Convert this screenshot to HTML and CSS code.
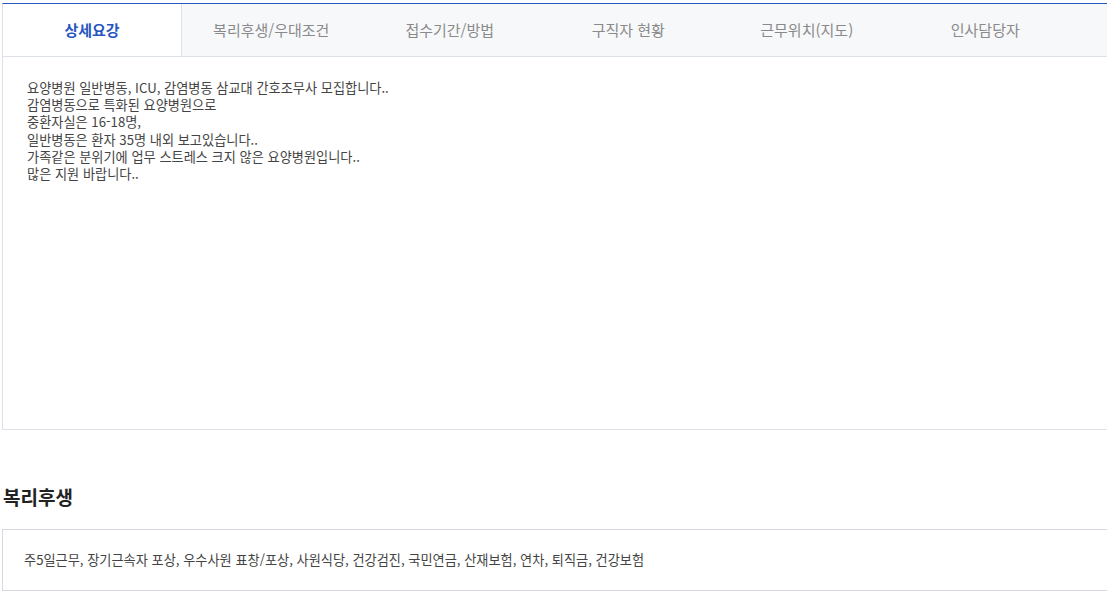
FILE: index.html
```html
<!DOCTYPE html>
<html lang="ko">
<head>
    <meta charset="UTF-8">
    <meta name="viewport" content="width=device-width, initial-scale=1.0">
    <title>채용 상세</title>
    <link rel="stylesheet" href="styles.css">
</head>
<body>
    <div class="wrap">
        <!-- 탭 메뉴 -->
        <ul class="tabs">
            <li class="tab active">상세요강</li>
            <li class="tab">복리후생/우대조건</li>
            <li class="tab">접수기간/방법</li>
            <li class="tab">구직자 현황</li>
            <li class="tab">근무위치(지도)</li>
            <li class="tab">인사담당자</li>
            <li class="tab tab-rest"></li>
        </ul>

        <div class="detail">
            <p>요양병원 일반병동, ICU, 감염병동 삼교대 간호조무사 모집합니다..<br>
            감염병동으로 특화된 요양병원으로<br>
            중환자실은 16-18명,<br>
            일반병동은 환자 35명 내외 보고있습니다..<br>
            가족같은 분위기에 업무 스트레스 크지 않은 요양병원입니다..<br>
            많은 지원 바랍니다..</p>
        </div>

        <h2 class="section-title">복리후생</h2>
        <div class="welfare">
            주5일근무, 장기근속자 포상, 우수사원 표창/포상, 사원식당, 건강검진, 국민연금, 산재보험, 연차, 퇴직금, 건강보험
        </div>
    </div>
</body>
</html>
```

FILE: styles.css
```css
body {
    margin: 0;
    padding: 0;
    background-color: #fff;
    font-family: "Noto Sans CJK KR", "Noto Sans", sans-serif;
    color: #333;
}
.wrap {
    margin: 3px 0 0 2px;
}
.tabs {
    display: flex;
    margin: 0;
    padding: 0;
    list-style: none;
    height: 52px;
    border-top: 1px solid #2856c0;
    border-left: 1px solid #dde1e8;
    border-bottom: 1px solid #dde1e8;
    background-color: #f7f8fa;
}
.tab {
    width: 178.5px;
    flex-shrink: 0;
    line-height: 52px;
    text-align: center;
    font-size: 15px;
    color: #8a8a8a;
}
.tab-rest {
    flex: 1;
    width: auto;
}
.tab.active {
    background-color: #fff;
    color: #2856c0;
    font-weight: bold;
    border-right: 1px solid #dde1e8;
    width: 178px;
}
.detail {
    height: 373px;
    box-sizing: border-box;
    border: 1px solid #dde1e8;
    border-top: none;
    border-right: none;
    padding: 22px 24px;
}
.detail p {
    margin: 0;
    font-size: 13.2px;
    line-height: 17.2px;
    color: #444;
}
.section-title {
    margin: 53px 0 0 1px;
    font-size: 19px;
    line-height: 28px;
    color: #222;
}
.welfare {
    margin-top: 18px;
    height: 62px;
    box-sizing: border-box;
    border: 1px solid #d5d8de;
    border-right: none;
    padding: 0 21px;
    line-height: 60px;
    font-size: 13.2px;
    color: #444;
}
```
